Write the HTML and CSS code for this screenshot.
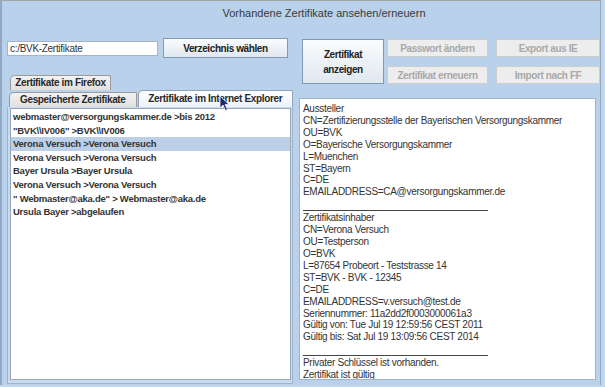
FILE: index.html
```html
<!DOCTYPE html>
<html lang="de">
<head>
<meta charset="UTF-8">
<title>Vorhandene Zertifikate ansehen/erneuern</title>
<link rel="stylesheet" href="styles.css">
</head>
<body>
<div class="window">
  <div class="title">Vorhandene Zertifikate ansehen/erneuern</div>

  <div class="main">
    <div class="left">
      <div class="dir-row">
        <div class="field">c:/BVK-Zertifikate</div>
        <button class="btn dir-btn">Verzeichnis wählen</button>
      </div>

      <div class="tabs">
        <div class="tab-row">
          <div class="tab tab-ff">Zertifikate im Firefox</div>
        </div>
        <div class="tab-row">
          <div class="tab tab-saved">Gespeicherte Zertifikate</div>
          <div class="tab tab-ie active">Zertifikate im Internet Explorer</div>
        </div>
      </div>

      <div class="tab-pane">
        <ul class="cert-list">
          <li>webmaster@versorgungskammer.de &gt;bis 2012</li>
          <li>"BVK\\IV006" &gt;BVK\\IV006</li>
          <li class="selected">Verona Versuch &gt;Verona Versuch</li>
          <li>Verona Versuch &gt;Verona Versuch</li>
          <li>Bayer Ursula &gt;Bayer Ursula</li>
          <li>Verona Versuch &gt;Verona Versuch</li>
          <li>" Webmaster@aka.de" &gt; Webmaster@aka.de</li>
          <li>Ursula Bayer &gt;abgelaufen</li>
        </ul>
      </div>
    </div>

    <div class="right">
      <div class="actions">
        <button class="btn show-btn">Zertifikat<br>anzeigen</button>
        <div class="action-grid">
          <button class="btn disabled">Passwort ändern</button>
          <button class="btn disabled">Export aus IE</button>
          <button class="btn disabled">Zertifikat erneuern</button>
          <button class="btn disabled">Import nach FF</button>
        </div>
      </div>

      <div class="details">
        <div>Aussteller</div>
        <div>CN=Zertifizierungsstelle der Bayerischen Versorgungskammer</div>
        <div>OU=BVK</div>
        <div>O=Bayerische Versorgungskammer</div>
        <div>L=Muenchen</div>
        <div>ST=Bayern</div>
        <div>C=DE</div>
        <div>EMAILADDRESS=CA@versorgungskammer.de</div>
        <div class="rule"></div>
        <div>Zertifikatsinhaber</div>
        <div>CN=Verona Versuch</div>
        <div>OU=Testperson</div>
        <div>O=BVK</div>
        <div>L=87654 Probeort - Teststrasse 14</div>
        <div>ST=BVK - BVK - 12345</div>
        <div>C=DE</div>
        <div>EMAILADDRESS=v.versuch@test.de</div>
        <div>Seriennummer: 11a2dd2f0003000061a3</div>
        <div>Gültig von: Tue Jul 19 12:59:56 CEST 2011</div>
        <div>Gültig bis: Sat Jul 19 13:09:56 CEST 2014</div>
        <div class="rule"></div>
        <div>Privater Schlüssel ist vorhanden.</div>
        <div>Zertifikat ist gültig</div>
      </div>
    </div>
  </div>

  <svg class="cursor" width="12" height="17" viewBox="0 0 12 17">
    <path d="M1 1 L1 13 L4 10 L6.5 15.5 L8.5 14.5 L6 9.5 L10 9.5 Z" fill="#1d2a6b" stroke="#e8eef6" stroke-width="0.8"/>
  </svg>
</div>
</body>
</html>
```

FILE: styles.css
```css
:root {
  --panel-blue: #b9d1ea;
  --edge-blue: #92a8c2;
  --text: #2a2a2a;
}

* {
  margin: 0;
  padding: 0;
  box-sizing: border-box;
}

body {
  font-family: "Liberation Sans", Arial, sans-serif;
  font-size: 10px;
  color: var(--text);
  background: #c3d7ec;
  width: 605px;
  height: 387px;
  overflow: hidden;
}

.window {
  position: relative;
  width: 601px;
  height: 385px;
  background: var(--panel-blue);
  border-top: 1px solid #a3a3a3;
  border-left: 2px solid var(--edge-blue);
  border-right: 1px solid var(--edge-blue);
}

.title {
  height: 37px;
  padding-top: 6px;
  padding-left: 46px;
  text-align: center;
  font-size: 11px;
  color: #3a3a3a;
}

.main {
  display: flex;
  gap: 6px;
  padding-left: 5px;
}

/* left column */

.left {
  width: 286px;
  display: flex;
  flex-direction: column;
}

.dir-row {
  display: flex;
  align-items: center;
  gap: 5px;
  height: 20px;
}

.field {
  width: 151px;
  height: 15px;
  background: #fff;
  border: 1px solid #a5b4c6;
  padding: 1px 2px;
  line-height: 11px;
  color: #333;
  letter-spacing: -0.3px;
}

.btn {
  font-family: inherit;
  font-size: 10px;
  font-weight: bold;
  letter-spacing: -0.4px;
  color: #222;
  background: linear-gradient(#fbfcfe, #dfe7f0);
  border: 1px solid #8299b2;
  cursor: pointer;
}

.dir-btn {
  width: 125px;
  height: 20px;
}

.tabs {
  margin-top: 17px;
  padding-left: 2px;
}

.tab-row {
  display: flex;
  align-items: flex-end;
}

.tab {
  height: 15px;
  line-height: 14px;
  font-weight: bold;
  letter-spacing: -0.35px;
  text-align: center;
  background: linear-gradient(#f2f2f2, #e0e0e0);
  border: 1px solid #9a9a9a;
  border-bottom: none;
  border-radius: 5px 2px 0 0;
}

.tab-ff {
  width: 101px;
  margin-left: 1px;
}

.tab-saved {
  width: 128px;
}

.tab-ie {
  width: 156px;
  height: 17px;
  line-height: 16px;
  margin-left: 1px;
}

.tab.active {
  background: linear-gradient(#fdfeff, #eef3f9);
  border-color: #8ea4be;
}

.tab-pane {
  width: 286px;
  height: 277px;
  padding: 1px 1px 3px 2px;
  border: 1px solid #9fb3ca;
  border-top: none;
  background: #c9dbee;
}

.cert-list {
  list-style: none;
  height: 100%;
  background: #fff;
  border: 1px solid #98a7b8;
  padding-top: 1px;
  font-size: 9.5px;
  font-weight: bold;
  letter-spacing: -0.25px;
  color: #333;
}

.cert-list li {
  height: 13.6px;
  line-height: 13px;
  padding-left: 2px;
}

.cert-list li.selected {
  background: #bbd0e7;
}

/* right column */

.right {
  width: 302px;
}

.actions {
  display: flex;
  gap: 3px;
  padding-left: 3px;
  height: 60px;
  padding-top: 1px;
}

.show-btn {
  width: 82px;
  height: 45px;
  line-height: 15px;
}

.action-grid {
  display: grid;
  grid-template-columns: 101px 104px;
  grid-template-rows: 18px 18px;
  column-gap: 8px;
  row-gap: 9px;
}

.btn.disabled {
  color: #a9a9a9;
  background: #ededed;
  border-color: #cdcdcd;
  cursor: default;
}

.details {
  width: 297px;
  height: 282px;
  background: #fff;
  border: 1px solid #a3b4c8;
  padding: 4px 3px 0;
  line-height: 11.9px;
  letter-spacing: -0.3px;
  color: #333;
  overflow: hidden;
}

.details .rule {
  width: 185px;
  height: 13px;
  border-bottom: 1px solid #444;
  margin-bottom: 1px;
}

.cursor {
  position: absolute;
  left: 217px;
  top: 94px;
}
```
